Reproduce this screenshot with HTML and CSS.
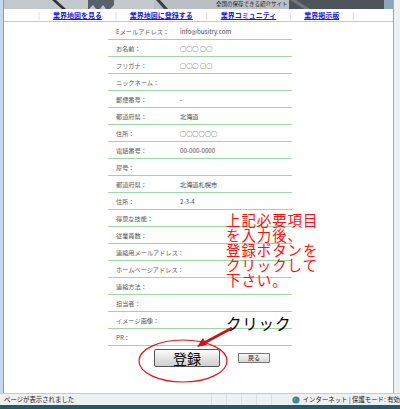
FILE: index.html
```html
<!DOCTYPE html>
<html lang="ja">
<head>
<meta charset="utf-8">
<title>登録確認</title>
<link rel="stylesheet" href="styles.css">
</head>
<body>
<div class="window">
  <div class="browser">
    <div class="leftbar"></div>
    <div class="page">
      <div class="header">
        <svg class="header-art" width="389" height="9" viewBox="0 0 389 9">
          <rect width="389" height="9" fill="#b9bfc4"/>
          <rect x="0" y="0" width="150" height="9" fill="#c3c8cc"/>
          <path d="M48 0 L58 9 L62 9 L52 0 Z" fill="#2e3338"/>
          <path d="M84 0 h26 v5 l-4 4 h-4 l-3 -4 l-3 4 h-4 l-3 -4 l-4 4 h-1 z" fill="#59606a"/>
          <path d="M152 0 L160 9 L164 9 L156 0 Z" fill="#3a3f45"/>
          <rect x="285" y="0" width="95" height="9" fill="#4c535b"/>
          <path d="M286 0 L300 9 L306 9 L292 0 Z" fill="#6f767e"/>
          <rect x="380" y="0" width="9" height="9" fill="#8ea6bc"/>
        </svg>
        <span class="header-text">全国の保存できる紹介サイト</span>
      </div>
      <nav class="nav">
        <span class="sep">|</span>
        <a href="#">業界地図を見る</a>
        <span class="sep">|</span>
        <a href="#">業界地図に登録する</a>
        <span class="sep">|</span>
        <a href="#">業界コミュニティ</a>
        <span class="sep">|</span>
        <a href="#">業界掲示板</a>
        <span class="sep">|</span>
      </nav>
      <div class="content">
        <div class="form">
          <div class="row"><span class="label">Eメールアドレス：</span><span class="value">info@busitry.com</span></div>
          <div class="row"><span class="label">お名前：</span><span class="value">○○○ ○○</span></div>
          <div class="row"><span class="label">フリガナ：</span><span class="value">○○○ ○○</span></div>
          <div class="row"><span class="label">ニックネーム：</span><span class="value"></span></div>
          <div class="row"><span class="label">郵便番号：</span><span class="value">-</span></div>
          <div class="row"><span class="label">都道府県：</span><span class="value">北海道</span></div>
          <div class="row"><span class="label">住所：</span><span class="value">○○○○○○</span></div>
          <div class="row"><span class="label">電話番号：</span><span class="value">00-000-0000</span></div>
          <div class="row"><span class="label">屋号：</span><span class="value"></span></div>
          <div class="row"><span class="label">都道府県：</span><span class="value">北海道札幌市</span></div>
          <div class="row"><span class="label">住所：</span><span class="value">2-3-4</span></div>
          <div class="row"><span class="label">得意な技能：</span><span class="value"></span></div>
          <div class="row"><span class="label">従業員数：</span><span class="value"></span></div>
          <div class="row"><span class="label">連絡用メールアドレス：</span><span class="value"></span></div>
          <div class="row"><span class="label">ホームページアドレス：</span><span class="value"></span></div>
          <div class="row"><span class="label">連絡方法：</span><span class="value"></span></div>
          <div class="row"><span class="label">担当者：</span><span class="value"></span></div>
          <div class="row"><span class="label">イメージ画像：</span><span class="value"></span></div>
          <div class="row"><span class="label">PR：</span><span class="value"></span></div>
          <div class="buttons">
            <button class="btn-main" type="button">登録</button>
            <button class="btn-back" type="button">戻る</button>
          </div>
        </div>
        <div class="note">上記必要項目<br>を入力後、<br>登録ボタンを<br>クリックして<br>下さい。</div>
        <div class="click">クリック</div>
        <svg class="annot" width="389" height="393" viewBox="0 0 389 393">
          <ellipse cx="179" cy="361" rx="44" ry="21" fill="none" stroke="#e0161c" stroke-width="1.2"/>
          <line x1="228" y1="328" x2="200" y2="343" stroke="#c8141a" stroke-width="2.6"/>
          <path d="M193 347 L199 338 L203 345 Z" fill="#c8141a"/>
        </svg>
      </div>
    </div>
    <div class="rightbar"></div>
  </div>
  <div class="status">
    <span class="status-text">ページが表示されました</span>
    <span class="divs"><i></i><i></i><i></i><i></i><i></i></span>
    <span class="zone">
      <svg class="globe" width="8" height="8" viewBox="0 0 8 8">
        <circle cx="4" cy="4" r="3.6" fill="#3a7bc8"/>
        <path d="M2 2 Q4 1 4.5 3 Q3 4 3.5 6 Q2 5.5 1.5 4 Z" fill="#4caf3c"/>
        <path d="M5 4.5 Q6.5 4 6.8 5.5 Q6 6.5 5.2 6.2 Z" fill="#4caf3c"/>
      </svg>
      インターネット | 保護モード: 有効
    </span>
  </div>
  <div class="taskbar"></div>
</div>
</body>
</html>
```
FILE: styles.css
```css
html, body {
  margin: 0;
  padding: 0;
  background: #ffffff;
}
body {
  font-family: "Noto Sans CJK JP", "Noto Sans", sans-serif;
  width: 400px;
  height: 409px;
  overflow: hidden;
}
.window {
  width: 400px;
  height: 409px;
  display: flex;
  flex-direction: column;
}
.browser {
  display: flex;
  height: 393px;
}
.leftbar {
  width: 3px;
  background: #c4d8ee;
  border-right: 1px solid #8d9aa8;
}
.rightbar {
  width: 6px;
  background: #eef0f2;
  border-left: 1px solid #a4a8ac;
}
.page {
  width: 389px;
  display: flex;
  flex-direction: column;
  position: relative;
  background: #fff;
}
.header {
  height: 9px;
  position: relative;
  overflow: hidden;
}
.header-art {
  display: block;
}
.header-text {
  position: absolute;
  left: 212px;
  top: 1px;
  font-size: 5.5px;
  line-height: 7px;
  color: #1e2328;
  white-space: nowrap;
}
.nav {
  height: 12px;
  border-bottom: 1px solid #c8c8c8;
  display: flex;
  align-items: center;
  padding-left: 21px;
  box-sizing: content-box;
}
.nav a {
  font-size: 7px;
  font-weight: bold;
  color: #1a1adc;
  text-decoration: underline;
  white-space: nowrap;
  line-height: 9px;
}
.nav .sep {
  font-size: 7px;
  color: #b0b0b0;
  margin: 0 13px;
  line-height: 9px;
}
.content {
  flex: 1;
  position: relative;
}
.form {
  margin-left: 104px;
  margin-top: 1px;
  width: 184px;
}
.row {
  height: 17px;
  box-sizing: border-box;
  border-bottom: 1px solid #9fd6a6;
  display: flex;
  align-items: flex-end;
  padding-bottom: 3px;
  font-size: 6.2px;
  line-height: 8px;
  color: #5a5a5a;
}
.label {
  width: 64px;
  padding-left: 8px;
  white-space: nowrap;
}
.value {
  color: #444;
  white-space: nowrap;
}
.buttons {
  display: flex;
  align-items: center;
  padding-left: 46px;
  margin-top: 3px;
  gap: 18px;
}
.btn-main {
  width: 66px;
  height: 18px;
  padding: 0;
  border: 1px solid #555;
  border-radius: 2px;
  background: linear-gradient(#fdfdfd, #e2e2e2 55%, #d0d0d0);
  font-family: "Noto Sans CJK JP", sans-serif;
  font-size: 14px;
  line-height: 16px;
  color: #000;
}
.btn-back {
  width: 32px;
  height: 10px;
  padding: 0;
  border: 1px solid #777;
  border-radius: 1px;
  background: linear-gradient(#f8f8f8, #d6d6d6);
  font-family: "Noto Sans CJK JP", sans-serif;
  font-size: 6px;
  line-height: 8px;
  color: #222;
}
.note {
  position: absolute;
  left: 222px;
  top: 190px;
  font-size: 14.5px;
  line-height: 15px;
  color: #ff1010;
  letter-spacing: 0.9px;
  white-space: nowrap;
}
.click {
  position: absolute;
  left: 222px;
  top: 293px;
  font-size: 15.5px;
  line-height: 17px;
  color: #000;
  letter-spacing: 0.8px;
  white-space: nowrap;
}
.annot {
  position: absolute;
  left: 0;
  top: -22px;
  pointer-events: none;
}
.status {
  height: 12px;
  background: #eff0f1;
  border-top: 1px solid #c9cccf;
  box-sizing: border-box;
  display: flex;
  align-items: center;
  position: relative;
  font-size: 6.4px;
  color: #222;
  white-space: nowrap;
  overflow: hidden;
}
.status-text {
  padding-left: 4px;
  width: 225px;
}
.divs {
  display: flex;
  height: 12px;
}
.divs i {
  width: 14px;
  height: 12px;
  border-left: 1px solid #dcdee0;
}
.zone {
  display: flex;
  align-items: center;
  gap: 3px;
  margin-left: 6px;
}
.globe {
  display: block;
}
.taskbar {
  height: 4px;
  background: #24596a;
}
```
